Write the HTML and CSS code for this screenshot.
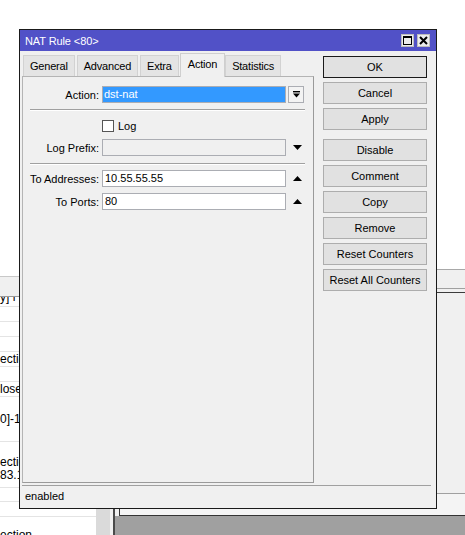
FILE: index.html
```html
<!DOCTYPE html>
<html>
<head>
<meta charset="utf-8">
<link rel="stylesheet" href="styles.css">
</head>
<body>
<div class="desk">
  <div class="back-list">
    <div class="bl-head"></div>
    <div class="bl-row r10"><span class="cut">y] r</span></div>
    <div class="bl-row"></div>
    <div class="bl-row"></div>
    <div class="bl-row"></div>
    <div class="bl-row">ection</div>
    <div class="bl-row"></div>
    <div class="bl-row">lose</div>
    <div class="bl-row r45">0]-183</div>
    <div class="bl-row r46"><div>ection</div><div>83.1</div></div>
    <div class="bl-row r14"></div>
    <div class="bl-row"></div>
    <div class="bl-row last">ection</div>
  </div>

  <div class="back-win">
    <div class="bw-top"></div>
    <div class="bw-dark"></div>
    <div class="bw-mid"></div>
    <div class="bw-bottom">
      <div class="bw-sb"></div>
      <div class="bw-frame">
        <div class="bw-frame-top"><div class="bw-tabline"></div></div>
        <div class="bw-gray"></div>
      </div>
    </div>
  </div>

  <div class="win">
    <div class="titlebar">
      <span class="title">NAT Rule &lt;80&gt;</span>
      <div class="tbtns">
        <span class="tbtn"><svg width="9" height="9" viewBox="0 0 9 9"><rect x="0.5" y="0.5" width="8" height="8" fill="none" stroke="#000"/><rect x="0" y="0" width="9" height="2" fill="#000"/></svg></span>
        <span class="tbtn"><svg width="9" height="9" viewBox="0 0 9 9"><path d="M1 1 L8 8 M8 1 L1 8" stroke="#000" stroke-width="2"/></svg></span>
      </div>
    </div>
    <div class="wbody">
      <div class="main">
        <div class="left">
          <div class="tabs">
            <div class="tab">General</div>
            <div class="tab">Advanced</div>
            <div class="tab">Extra</div>
            <div class="tab sel">Action</div>
            <div class="tab">Statistics</div>
          </div>
          <div class="panel">
            <div class="row r-action">
              <span class="lbl">Action:</span>
              <span class="field blue">dst-nat</span>
              <span class="dd"><svg width="9" height="9" viewBox="0 0 9 9"><rect x="1" y="1" width="7" height="1.4" fill="#000"/><polygon points="1,3.5 8,3.5 4.5,7.5" fill="#000"/></svg></span>
            </div>
            <div class="sep s1"></div>
            <div class="row r-log">
              <span class="lbl"></span>
              <span class="chk"></span>
              <span class="chk-lbl">Log</span>
            </div>
            <div class="row r-prefix">
              <span class="lbl">Log Prefix:</span>
              <span class="field dis"></span>
              <span class="tri"><svg width="9" height="5" viewBox="0 0 9 5"><polygon points="0,0 9,0 4.5,5" fill="#000"/></svg></span>
            </div>
            <div class="sep s2"></div>
            <div class="row r-addr">
              <span class="lbl">To Addresses:</span>
              <span class="field">10.55.55.55</span>
              <span class="tri"><svg width="9" height="5" viewBox="0 0 9 5"><polygon points="0,5 9,5 4.5,0" fill="#000"/></svg></span>
            </div>
            <div class="row r-ports">
              <span class="lbl">To Ports:</span>
              <span class="field">80</span>
              <span class="tri"><svg width="9" height="5" viewBox="0 0 9 5"><polygon points="0,5 9,5 4.5,0" fill="#000"/></svg></span>
            </div>
          </div>
        </div>
        <div class="btns">
          <div class="btn def">OK</div>
          <div class="btn">Cancel</div>
          <div class="btn">Apply</div>
          <div class="btn gap">Disable</div>
          <div class="btn">Comment</div>
          <div class="btn">Copy</div>
          <div class="btn">Remove</div>
          <div class="btn">Reset Counters</div>
          <div class="btn">Reset All Counters</div>
        </div>
      </div>
      <div class="status">enabled</div>
    </div>
  </div>
</div>
</body>
</html>
```

FILE: styles.css
```css
* { box-sizing: border-box; }
html, body { margin: 0; padding: 0; }
body {
  width: 465px;
  height: 535px;
  overflow: hidden;
  background: #fff;
  font-family: "Liberation Sans", Arial, sans-serif;
  font-size: 11px;
  color: #000;
}
.desk { position: relative; width: 465px; height: 535px; overflow: hidden; }

/* background list window (left) */
.back-list {
  position: absolute;
  left: 0; top: 276px;
  width: 96px; height: 259px;
  background: #fff;
  border-top: 1px solid #c8c8c8;
  overflow: hidden;
}
.bl-head { height: 20px; background: #f0f0f0; border-bottom: 1px solid #9a9a9a; }
.bl-row {
  height: 15px;
  border-bottom: 1px solid #e4e4e4;
  line-height: 14px;
  white-space: nowrap;
  overflow: hidden;
  font-size: 12px;
}
.bl-row.r10 { height: 10px; }
.bl-row.r10 .cut { display: block; margin-top: -7px; }
.bl-row.r45 { height: 45px; line-height: 44px; }
.bl-row.r46 { height: 46px; padding-top: 14px; line-height: 13px; }
.bl-row.r14 { height: 14px; }
.bl-row.last { height: 20px; line-height: 36px; }

/* background window (right / bottom) */
.back-win {
  position: absolute;
  left: 96px; top: 269px; right: 0; bottom: 0;
  background: #f0f0f0;
  border-top: 1px solid #a8a8a8;
  display: flex;
  flex-direction: column;
}
.bw-top { height: 19px; border-bottom: 1px solid #a0a0a0; }
.bw-dark { height: 4px; border-bottom: 1px solid #3c3c3c; }
.bw-mid { height: 201px; border-bottom: 1px solid #a0a0a0; }
.bw-bottom { flex: 1; display: flex; }
.bw-sb { width: 14px; background: #dadada; }
.bw-frame {
  flex: 1;
  margin-left: 3px;
  border-left: 2px solid #4a4a4a;
  display: flex;
  flex-direction: column;
}
.bw-frame-top { height: 22px; padding-left: 4px; }
.bw-tabline { height: 100%; border-left: 1px solid #333; border-bottom: 1px solid #333; background: #f4f4f4; }
.bw-gray { flex: 1; background: #a0a0a0; }

/* main window */
.win {
  position: absolute;
  left: 19px; top: 29px;
  width: 418px; height: 480px;
  border: 1px solid #1a1a1a;
  background: #f0f0f0;
  display: flex;
  flex-direction: column;
}
.titlebar {
  height: 21px;
  background: #5151c7;
  display: flex;
  align-items: center;
  justify-content: space-between;
  padding: 0 6px 0 5px;
}
.title { color: #fff; font-size: 11px; letter-spacing: -0.1px; }
.tbtns { display: flex; gap: 3px; }
.tbtn {
  width: 13px; height: 13px;
  background: #ececec;
  border: 1px solid #bdbdbd;
  display: flex;
  align-items: center;
  justify-content: center;
}
.wbody { flex: 1; display: flex; flex-direction: column; }
.main { height: 432px; display: flex; }
.left { width: 292px; margin-left: 2px; display: flex; flex-direction: column; }
.tabs { height: 25px; display: flex; align-items: flex-end; padding-left: 1px; }
.tab {
  height: 21px;
  padding: 0 6px;
  line-height: 20px;
  background: #e4e4e4;
  border: 1px solid #d2d2d2;
  border-bottom: none;
  margin-right: 2px;
  white-space: nowrap;
  letter-spacing: -0.2px;
}
.tab.sel {
  position: relative;
  z-index: 1;
  height: 24px;
  line-height: 20px;
  background: #f0f0f0;
  margin-bottom: -1px;
  margin-left: -1px;
  margin-right: 0;
  padding: 0 7px;
  border-color: #cfcfcf;
}
.panel {
  flex: 1;
  border: 1px solid #b4b4b4;
  border-right-color: #9a9a9a;
  border-bottom-color: #9a9a9a;
  padding-top: 9px;
}
.row { display: flex; align-items: center; height: 17px; }
.lbl { width: 76px; text-align: right; white-space: nowrap; }
.field {
  width: 184px;
  height: 17px;
  margin-left: 3px;
  border: 1px solid #abadb3;
  background: #fff;
  padding-left: 2px;
  line-height: 15px;
  white-space: nowrap;
}
.field.blue { background: #3399ff; color: #fff; padding-left: 1px; }
.field.dis { background: #f0f0f0; }
.dd {
  width: 16px; height: 17px;
  margin-left: 2px;
  border: 1px solid #abadb3;
  background: #f3f3f3;
  display: flex;
  align-items: center;
  justify-content: center;
}
.tri { margin-left: 7px; display: flex; align-items: center; }
.sep {
  margin-left: 7px;
  width: 275px;
  height: 2px;
  border-top: 1px solid #a0a0a0;
  border-bottom: 1px solid #fff;
}
.s1 { margin-top: 6px; }
.r-log { margin-top: 6px; }
.chk {
  width: 12px; height: 12px;
  margin-left: 3px;
  border: 1px solid #555;
  background: #fff;
}
.chk-lbl { margin-left: 4px; }
.r-prefix { margin-top: 5px; }
.s2 { margin-top: 7px; }
.r-addr { margin-top: 5px; }
.r-ports { margin-top: 6px; }

.btns {
  width: 104px;
  margin-left: 9px;
  padding-top: 5px;
  display: flex;
  flex-direction: column;
  gap: 4px;
}
.btn {
  height: 22px;
  border: 1px solid #adadad;
  background: #e1e1e1;
  text-align: center;
  line-height: 20px;
  white-space: nowrap;
}
.btn.def { border-color: #1a1a1a; }
.btn.gap { margin-top: 5px; }

.status {
  height: 22px;
  margin: 2px 5px 1px 2px;
  border-top: 1px solid #a0a0a0;
  padding-left: 3px;
  line-height: 20px;
}
```
